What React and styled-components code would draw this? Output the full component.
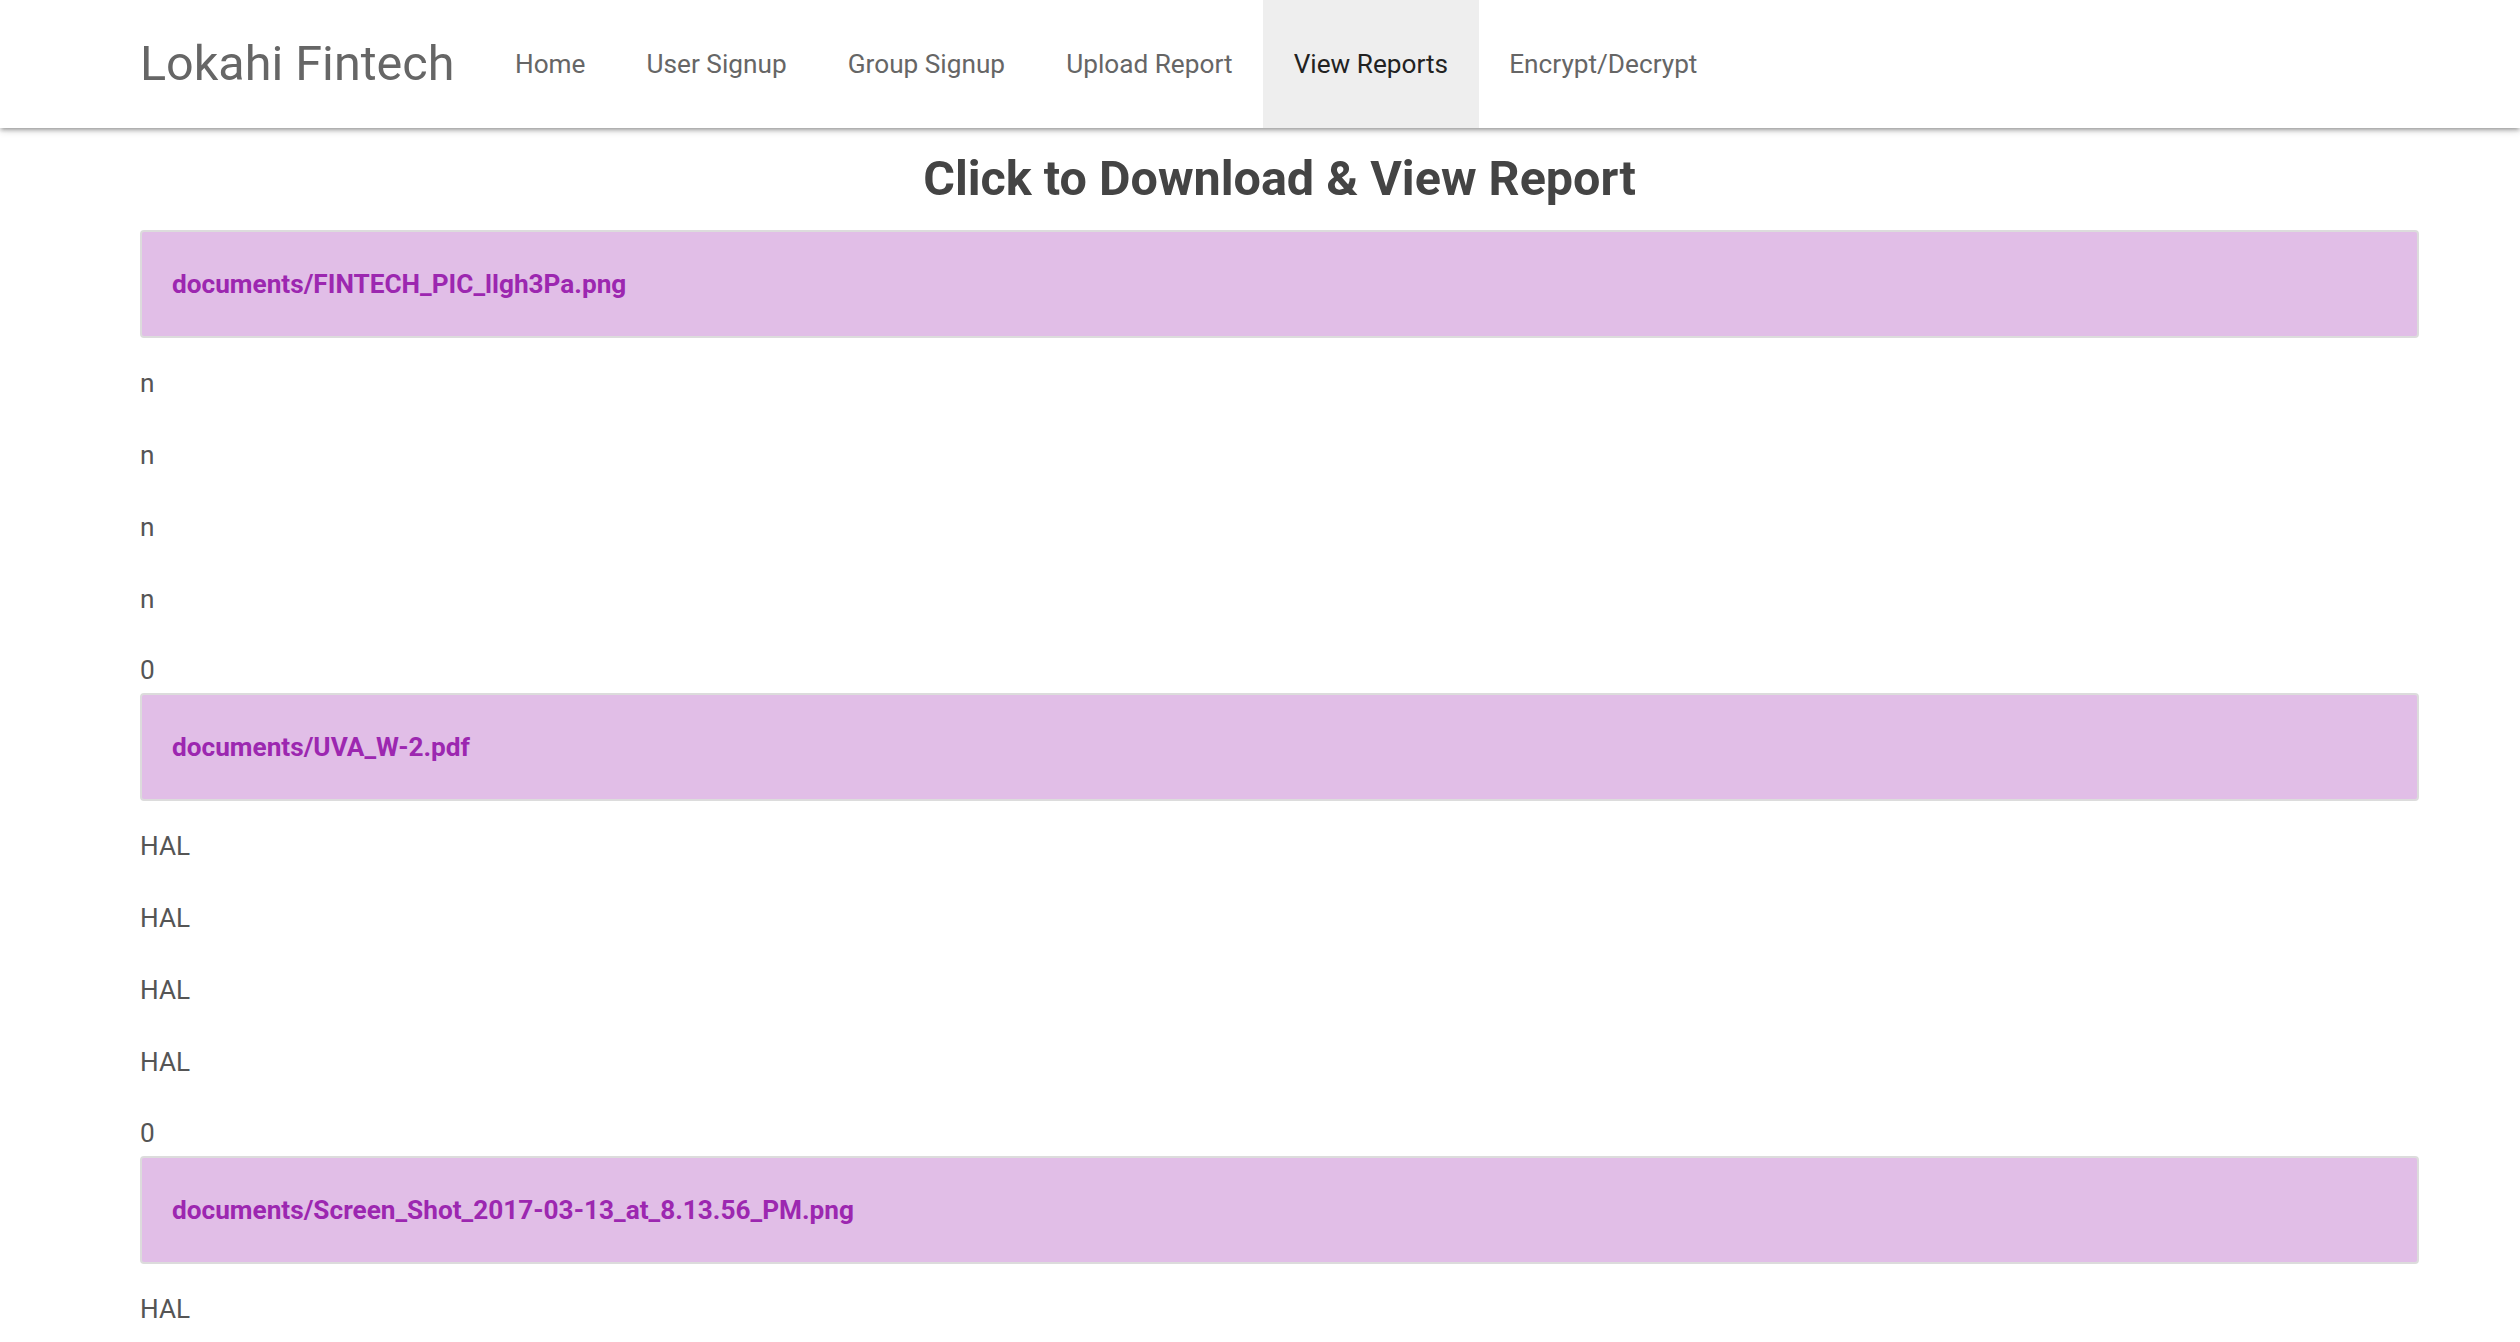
import React from 'react';
import styled, {createGlobalStyle} from "styled-components";

const GlobalStyle = createGlobalStyle`
  body {
    margin: 0;
    background: #ffffff;
    font-family: Roboto, "Noto Sans", "Liberation Sans", sans-serif;
    color: #555555;
  }
`;

const NavBar = styled.nav`
  height: 128px;
  background: #ffffff;
  box-shadow: 0 3px 3px 0 rgba(0, 0, 0, 0.14), 0 4px 2px -3px rgba(0, 0, 0, 0.12), 0 2px 8px 0 rgba(0, 0, 0, 0.2);
`;

const NavWrapper = styled.div`
  width: 2279px;
  margin-left: 140px;
  height: 100%;
  display: flex;
  align-items: center;
`;

const Brand = styled.a`
  font-size: 48.5px;
  color: #666666;
  text-decoration: none;
  margin-right: 30px;
  line-height: 128px;
`;

const NavList = styled.ul`
  list-style: none;
  margin: 0;
  padding: 0;
  display: flex;
  height: 100%;
`;

const NavItem = styled.li`
  display: flex;
  align-items: center;
  padding: 0 30.6px;
  font-size: 26.2px;
  color: ${props => props.active ? "#222222" : "#666666"};
  background: ${props => props.active ? "#eeeeee" : "transparent"};
  cursor: pointer;
`;

const Container = styled.div`
  width: 2279px;
  margin-left: 140px;
`;

const Title = styled.h1`
  margin: 0;
  padding-top: 6px;
  padding-bottom: 3px;
  height: 90px;
  line-height: 90px;
  text-align: center;
  font-size: 48.5px;
  font-weight: 700;
  color: #444444;
`;

const Report = styled.div`
  margin-top: 3px;
`;

const ReportCard = styled.div`
  height: 108px;
  box-sizing: border-box;
  display: flex;
  align-items: center;
  padding-left: 30px;
  background: #e1bee7;
  border: 2px solid #dcdcdc;
  border-radius: 4px;
  font-size: 26.2px;
  font-weight: 700;
  color: #9c27b0;
`;

const Lines = styled.div`
  display: flex;
  flex-direction: column;
  gap: 32px;
  padding-top: 25px;
`;

const Line = styled.p`
  margin: 0;
  height: 40px;
  line-height: 40px;
  font-size: 26.2px;
  color: #555555;
`;

const Count = styled(Line)`
  margin-top: 31px;
`;

const reports = [
    {name: "documents/FINTECH_PIC_llgh3Pa.png", values: ["n", "n", "n", "n"], count: 0},
    {name: "documents/UVA_W-2.pdf", values: ["HAL", "HAL", "HAL", "HAL"], count: 0},
    {name: "documents/Screen_Shot_2017-03-13_at_8.13.56_PM.png", values: ["HAL", "HAL", "HAL", "HAL"], count: 0},
];

const links = ["Home", "User Signup", "Group Signup", "Upload Report", "View Reports", "Encrypt/Decrypt"];

export default function App() {
    return (
        <>
            <GlobalStyle />
            <NavBar>
                <NavWrapper>
                    <Brand>Lokahi Fintech</Brand>
                    <NavList>
                        {links.map(link => (
                            <NavItem key={link} active={link === "View Reports"}>{link}</NavItem>
                        ))}
                    </NavList>
                </NavWrapper>
            </NavBar>
            <Container>
                <Title>Click to Download &amp; View Report</Title>
                {reports.map(report => (
                    <Report key={report.name}>
                        <ReportCard>{report.name}</ReportCard>
                        <Lines>
                            {report.values.map((value, i) => (
                                <Line key={i}>{value}</Line>
                            ))}
                        </Lines>
                        <Count>{report.count}</Count>
                    </Report>
                ))}
            </Container>
        </>
    );
}
